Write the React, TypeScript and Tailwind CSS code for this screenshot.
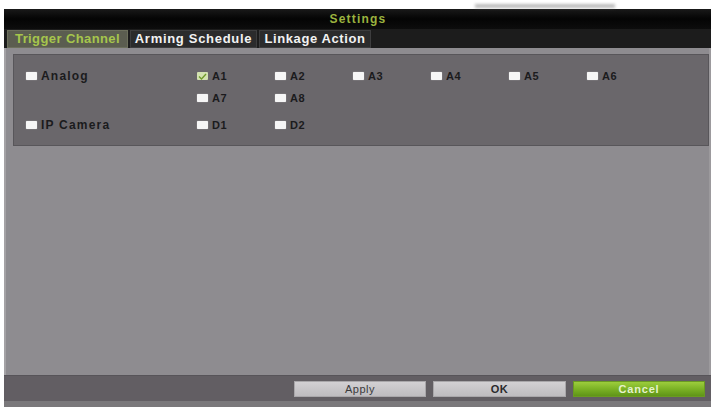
import React from "react";

const font = { fontFamily: '"Liberation Sans", Arial, sans-serif' };

function Box({ checked = false }: { checked?: boolean }) {
  return checked ? (
    <span className="w-[11px] h-[8px] bg-[#d3e2b0] rounded-[1px] mr-[4px] flex items-center justify-center shrink-0">
      <svg width="9" height="7" viewBox="0 0 9 7">
        <path d="M1 3.5 L3.5 6 L8 1" stroke="#6f9a2a" strokeWidth="1.3" fill="none" />
      </svg>
    </span>
  ) : (
    <span className="w-[11px] h-[8px] bg-[#f6f6f6] rounded-[1px] mr-[4px] shrink-0 shadow-[0_0_1px_#ddd]" />
  );
}

function Cell({ label, checked }: { label: string; checked?: boolean }) {
  return (
    <div className="w-[78px] h-[20px] flex items-center">
      <Box checked={checked} />
      <span className="text-[11px] font-bold text-[#1b1b1d] tracking-[0.6px]">{label}</span>
    </div>
  );
}

function Row({ title, items, className = "" }: { title?: string; items: { l: string; c?: boolean }[]; className?: string }) {
  return (
    <div className={"flex " + className}>
      <div className="w-[171px] h-[20px] flex items-center">
        {title && (
          <>
            <Box />
            <span className="text-[12px] font-bold text-[#1b1b1d] tracking-[1.2px]">{title}</span>
          </>
        )}
      </div>
      <div className="flex">
        {items.map((it) => (
          <Cell key={it.l} label={it.l} checked={it.c} />
        ))}
      </div>
    </div>
  );
}

export default function App() {
  return (
    <div className="w-[712px] h-[407px] bg-white overflow-hidden relative" style={font}>
      <div className="absolute left-[475px] top-[4px] w-[140px] h-[4px] bg-[#8f8f8f] blur-[1.5px] opacity-60" />
      <div className="ml-[4px] pt-[9px] w-[707px] flex flex-col h-[407px]">
        {/* title bar */}
        <div className="h-[20px] bg-gradient-to-b from-[#1a1a1a] via-[#050505] to-[#0d0d0d] flex items-center justify-center">
          <span className="text-[12px] font-bold text-[#9bb33f] tracking-[1.2px] ml-[1px]">Settings</span>
        </div>
        {/* tab row */}
        <div className="h-[19px] bg-[#1c1c1c] flex items-end pl-[3px] gap-[2px]">
          <div className="h-[18px] w-[121px] bg-[#5b5d50] border border-[#6c6f5c] flex items-center justify-center">
            <span className="text-[13px] font-bold text-[#a6c64c] tracking-[0.4px]">Trigger Channel</span>
          </div>
          <div className="h-[18px] w-[127px] bg-[#2b2b2c] border border-[#3d3d3e] flex items-center justify-center">
            <span className="text-[13px] font-bold text-[#f2f2f2] tracking-[0.7px]">Arming Schedule</span>
          </div>
          <div className="h-[18px] w-[112px] bg-[#2b2b2c] border border-[#3d3d3e] flex items-center justify-center">
            <span className="text-[13px] font-bold text-[#f2f2f2] tracking-[0.6px]">Linkage Action</span>
          </div>
        </div>
        {/* body */}
        <div className="flex-1 bg-[#8e8c90] border-l-2 border-r-2 border-l-[#a4a2a5] border-r-[#9c9a9d] pt-[6px] pl-[7px]">
          <div className="h-[92px] bg-[#6a676b] border border-[#58565a] pt-[11px] pl-[12px]">
            <Row title="Analog" items={[{ l: "A1", c: true }, { l: "A2" }, { l: "A3" }, { l: "A4" }, { l: "A5" }, { l: "A6" }]} />
            <Row items={[{ l: "A7" }, { l: "A8" }]} className="mt-[2px]" />
            <Row title="IP Camera" items={[{ l: "D1" }, { l: "D2" }]} className="mt-[7px]" />
          </div>
        </div>
        {/* footer */}
        <div className="h-[26px] bg-[#625e63] border-t border-[#575459] flex items-start justify-end pt-[5px] pr-[6px] gap-[7px]">
          <div className="w-[132px] h-[16px] bg-gradient-to-b from-[#d2d0d3] to-[#bebcbf] border border-[#a9a7aa] flex items-center justify-center">
            <span className="text-[11px] text-[#3a3a3c] tracking-[0.5px]">Apply</span>
          </div>
          <div className="w-[133px] h-[16px] bg-gradient-to-b from-[#d2d0d3] to-[#bebcbf] border border-[#a9a7aa] flex items-center justify-center">
            <span className="text-[11px] font-bold text-[#2a2a2c] tracking-[0.5px]">OK</span>
          </div>
          <div className="w-[132px] h-[16px] bg-gradient-to-b from-[#9ccd3c] via-[#7bb225] to-[#5f9418] border border-[#6a9a22] flex items-center justify-center">
            <span className="text-[11px] font-bold text-[#e6f2cc] tracking-[0.8px]">Cancel</span>
          </div>
        </div>
        <div className="h-[6px] bg-[#7a787b]" />
      </div>
    </div>
  );
}
